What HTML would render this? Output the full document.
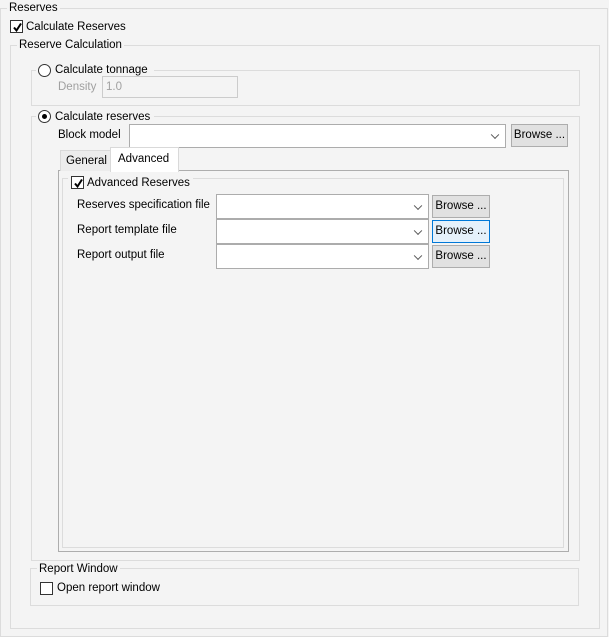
<!DOCTYPE html>
<html><head><style>
*{box-sizing:border-box;margin:0;padding:0}
body{width:609px;height:637px;background:#f4f4f4;font-family:"Liberation Sans",sans-serif;font-size:11.5px;color:#000;position:relative;overflow:hidden}
.a{position:absolute}
.g{position:absolute;border:1px solid #dcdcdc}
.lbl{position:absolute;background:#f4f4f4;padding:0 2px;line-height:14px;white-space:nowrap}
.t{position:absolute;line-height:14px;white-space:nowrap}
.cb{position:absolute;width:13px;height:13px;border:1px solid #333;background:#fff}
.cb svg{position:absolute;left:1px;top:1px}
.rd{position:absolute;width:13px;height:13px;border:1px solid #333;border-radius:50%;background:#fff}
.combo{position:absolute;background:#fff;border:1px solid #acacac}
.combo:after{content:"";position:absolute;right:7px;top:50%;width:5px;height:5px;border-right:1.5px solid #555;border-bottom:1.5px solid #555;transform:translateY(-70%) rotate(45deg)}
.btn{position:absolute;background:#e1e1e1;border:1px solid #adadad;text-align:center;line-height:20px;white-space:nowrap}
</style></head><body>
<div class="g" style="left:0;top:8px;width:608px;height:629px;border-color:#dcdcdc"></div>
<div class="lbl" style="left:7px;top:1px">Reserves</div>
<div class="cb" style="left:10px;top:20px"><svg width="11" height="11"><path d="M2 5.5 L4.5 8.5 L9 1.5" stroke="#000" stroke-width="2" fill="none"/></svg></div>
<div class="t" style="left:26px;top:20px">Calculate Reserves</div>

<div class="g" style="left:10px;top:45px;width:590px;height:584px"></div>
<div class="lbl" style="left:17px;top:38px">Reserve Calculation</div>

<div class="g" style="left:31px;top:70px;width:549px;height:36px"></div>
<div class="lbl" style="left:36px;top:63px;width:118px;height:14px"></div>
<div class="rd" style="left:38px;top:64px"></div>
<div class="t" style="left:55px;top:63px">Calculate tonnage</div>
<div class="t" style="left:58px;top:80px;color:#a0a0a0">Density</div>
<div class="a" style="left:102px;top:76px;width:136px;height:22px;border:1px solid #ccc;background:#f4f4f4"></div>
<div class="t" style="left:106px;top:80px;color:#a0a0a0">1.0</div>

<div class="g" style="left:31px;top:116px;width:549px;height:445px"></div>
<div class="lbl" style="left:36px;top:109px;width:118px;height:14px"></div>
<div class="rd" style="left:38px;top:110px"><div class="a" style="left:3px;top:3px;width:5px;height:5px;border-radius:50%;background:#000"></div></div>
<div class="t" style="left:55px;top:110px">Calculate reserves</div>
<div class="t" style="left:58px;top:128px">Block model</div>
<div class="combo" style="left:129px;top:124px;width:377px;height:24px"></div>
<div class="btn" style="left:511px;top:124px;width:57px;height:23px">Browse ...</div>

<div class="a" style="left:58px;top:170px;width:511px;height:382px;border:1px solid #adadad;background:#f4f4f4"></div>
<div class="a" style="left:60px;top:150px;width:51px;height:21px;border:1px solid #d9d9d9;border-bottom:none;background:#ececec"></div>
<div class="t" style="left:66px;top:154px">General</div>
<div class="a" style="left:110px;top:147px;width:69px;height:25px;border:1px solid #d9d9d9;border-bottom:none;background:#fff"></div>
<div class="t" style="left:118px;top:152px">Advanced</div>
<div class="a" style="left:62px;top:178px;width:502px;height:370px;border:1px solid #dcdcdc"></div>
<div class="lbl" style="left:68px;top:176px;width:125px;height:14px"></div>
<div class="cb" style="left:71px;top:176px"><svg width="11" height="11"><path d="M2 5.5 L4.5 8.5 L9 1.5" stroke="#000" stroke-width="2" fill="none"/></svg></div>
<div class="t" style="left:87px;top:176px">Advanced Reserves</div>

<div class="t" style="left:77px;top:198px">Reserves specification file</div>
<div class="combo" style="left:216px;top:194px;width:213px;height:25px"></div>
<div class="btn" style="left:432px;top:195px;width:58px;height:23px">Browse ...</div>
<div class="t" style="left:77px;top:223px">Report template file</div>
<div class="combo" style="left:216px;top:219px;width:213px;height:25px"></div>
<div class="btn" style="left:432px;top:220px;width:58px;height:23px;background:#e5f1fb;border-color:#0078d7">Browse ...</div>
<div class="t" style="left:77px;top:248px">Report output file</div>
<div class="combo" style="left:216px;top:244px;width:213px;height:25px"></div>
<div class="btn" style="left:432px;top:245px;width:58px;height:23px">Browse ...</div>

<div class="g" style="left:30px;top:568px;width:549px;height:38px"></div>
<div class="lbl" style="left:37px;top:562px">Report Window</div>
<div class="cb" style="left:40px;top:582px;border-color:#333"></div>
<div class="t" style="left:57px;top:581px">Open report window</div>
</body></html>
